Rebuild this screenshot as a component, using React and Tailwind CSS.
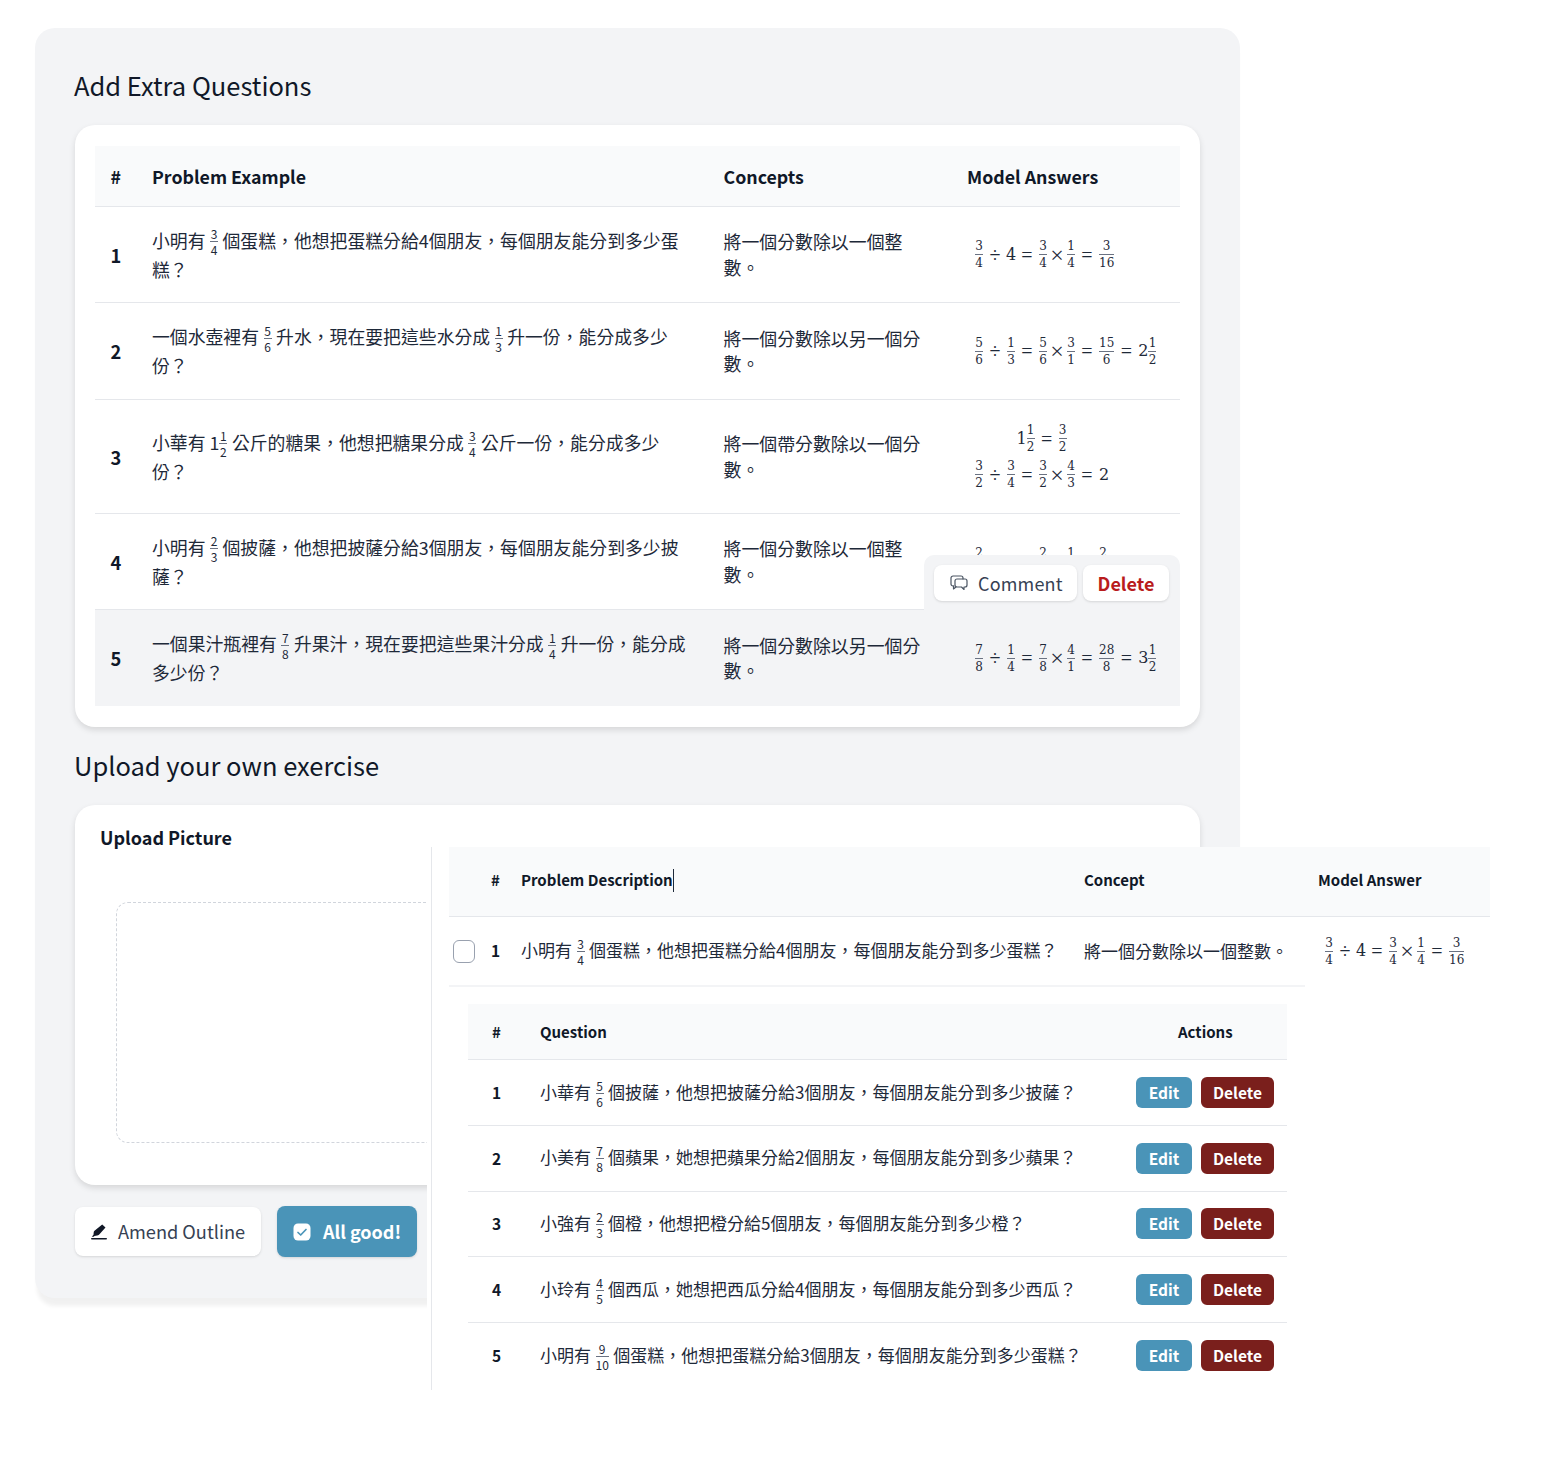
import React from "react";

const F = ({ n, d, cls = "mx-[4.500px]" }) => (
  <span className={`inline-flex flex-col items-center align-middle -my-[10px] -translate-y-px text-[12px] leading-[15px] font-normal ${cls}`}>
    <span>{n}</span>
    <span className="w-full min-w-[8px] h-px bg-gray-500"></span>
    <span>{d}</span>
  </span>
);

const MF = ({ n, d }) => (
  <span className="inline-flex flex-col items-center text-[12px] leading-[14px] font-['DejaVu_Serif',serif]">
    <span>{n}</span>
    <span className="w-full min-w-[8px] h-px bg-gray-500 my-px"></span>
    <span>{d}</span>
  </span>
);

const Op = ({ c, w = "w-[24px]", size = "text-[20px]" }) => (
  <span className={`inline-flex justify-center leading-[20px] ${size} ${w}`}>{c}</span>
);

const Mixed = ({ a, n, d }) => (
  <span className="inline-flex items-center">
    <span className="text-[16px] font-['DejaVu_Serif',serif]">{a}</span>
    <MF n={n} d={d} />
  </span>
);

const Num = ({ c }) => <span className="text-[16px] w-[8px] inline-flex justify-center font-['DejaVu_Serif',serif]">{c}</span>;

const Eq = ({ children }) => (
  <div className="flex items-center h-[36px] text-gray-800 font-['Liberation_Serif',serif] whitespace-nowrap">{children}</div>
);

const Times = () => <Op c="×" w="w-[20px]" size="text-[24px]" />;

const Math1 = ({ a, b, c, d, e, f, last }) => (
  <Eq>
    <MF n={a} d={b} />
    <Op c="÷" />
    <MF n={c} d={d} />
    <Op c="=" />
    <MF n={a} d={b} />
    <Times />
    <MF n={e} d={f} />
    <Op c="=" />
    {last}
  </Eq>
);

const rows = [
  {
    h: "h-[96px]",
    q: <>小明有<F n="3" d="4" />個蛋糕，他想把蛋糕分給4個朋友，每個朋友能分到多少蛋<br />糕？</>,
    c: <>將一個分數除以一個整<br />數。</>,
    m: (
      <Eq>
        <MF n="3" d="4" /><Op c="÷" /><Num c="4" /><Op c="=" /><MF n="3" d="4" /><Times /><MF n="1" d="4" /><Op c="=" /><MF n="3" d="16" />
      </Eq>
    ),
  },
  {
    h: "h-[97px]",
    q: <>一個水壺裡有<F n="5" d="6" />升水，現在要把這些水分成<F n="1" d="3" />升一份，能分成多少<br />份？</>,
    c: <>將一個分數除以另一個分<br />數。</>,
    m: (
      <Math1 a="5" b="6" c="1" d="3" e="3" f="1" last={<><MF n="15" d="6" /><Op c="=" /><Mixed a="2" n="1" d="2" /></>} />
    ),
  },
  {
    h: "h-[114px]",
    q: <>小華有 1<F n="1" d="2" cls="mr-[4.500px]" />公斤的糖果，他想把糖果分成<F n="3" d="4" />公斤一份，能分成多少<br />份？</>,
    c: <>將一個帶分數除以一個分<br />數。</>,
    m: (
      <div className="flex flex-col items-start">
        <div className="w-[133px] flex justify-center">
          <Eq><Mixed a="1" n="1" d="2" /><Op c="=" /><MF n="3" d="2" /></Eq>
        </div>
        <Math1 a="3" b="2" c="3" d="4" e="4" f="3" last={<span className="text-[16px] font-['DejaVu_Serif',serif]">2</span>} />
      </div>
    ),
  },
  {
    h: "h-[96px]",
    q: <>小明有<F n="2" d="3" />個披薩，他想把披薩分給3個朋友，每個朋友能分到多少披<br />薩？</>,
    c: <>將一個分數除以一個整<br />數。</>,
    m: (
      <Eq>
        <MF n="2" d="3" /><Op c="÷" /><Num c="3" /><Op c="=" /><MF n="2" d="3" /><Times /><MF n="1" d="3" /><Op c="=" /><MF n="2" d="9" />
      </Eq>
    ),
    pop: true,
  },
  {
    h: "h-[96px]",
    bg: "bg-[#f3f4f6]",
    q: <>一個果汁瓶裡有<F n="7" d="8" />升果汁，現在要把這些果汁分成<F n="1" d="4" />升一份，能分成<br />多少份？</>,
    c: <>將一個分數除以另一個分<br />數。</>,
    m: (
      <Math1 a="7" b="8" c="1" d="4" e="4" f="1" last={<><MF n="28" d="8" /><Op c="=" /><Mixed a="3" n="1" d="2" /></>} />
    ),
    last: true,
  },
];

const subs = [
  <>小華有<F n="5" d="6" />個披薩，他想把披薩分給3個朋友，每個朋友能分到多少披薩？</>,
  <>小美有<F n="7" d="8" />個蘋果，她想把蘋果分給2個朋友，每個朋友能分到多少蘋果？</>,
  <>小強有<F n="2" d="3" />個橙，他想把橙分給5個朋友，每個朋友能分到多少橙？</>,
  <>小玲有<F n="4" d="5" />個西瓜，她想把西瓜分給4個朋友，每個朋友能分到多少西瓜？</>,
  <>小明有<F n="9" d="10" />個蛋糕，他想把蛋糕分給3個朋友，每個朋友能分到多少蛋糕？</>,
];

const CommentIcon = () => (
  <svg width="18" height="16" viewBox="0 0 18 16" fill="none" stroke="#4b5563" strokeWidth="1.200" strokeLinejoin="round" strokeLinecap="round">
    <path d="M4 11H3a2 2 0 0 1-2-2V3a2 2 0 0 1 2-2h8a2 2 0 0 1 2 2v1" />
    <path d="M7 4h8a2 2 0 0 1 2 2v4a2 2 0 0 1-2 2h-1v2.500L11.500 12H7a2 2 0 0 1-2-2V6a2 2 0 0 1 2-2z" />
    <path d="M3.500 11v3l2.500-2" />
  </svg>
);

const PenIcon = () => (
  <svg width="16" height="16" viewBox="0 0 16 16" fill="#111827">
    <path d="M11.200 0.500l3.300 3-6.500 7.300c-0.500 0.500-1.200 0.800-1.900 0.800L3.500 12l-0.800 0.700H0.800l1.700-2 0.200-2.200c0-0.700 0.300-1.300 0.800-1.800z" />
    <rect x="0" y="14" width="16" height="1.600" rx="0.800" />
  </svg>
);

const CheckIcon = () => (
  <svg width="18" height="18" viewBox="0 0 18 18">
    <rect x="0.500" y="0.500" width="17" height="17" rx="4.500" fill="#ffffff" />
    <path d="M5 9.500l2.700 2.500 5.300-5.500" fill="none" stroke="#4a94b8" strokeWidth="1.700" strokeLinecap="round" strokeLinejoin="round" />
  </svg>
);

export default function App() {
  return (
    <div className="relative w-[1541px] h-[1458px] bg-white pt-[28px] pl-[35px] overflow-hidden font-['Noto_Sans_CJK_TC','Noto_Sans_CJK_SC',sans-serif] text-gray-800">
      <div className="w-[1205px] h-[1270px] bg-[#f3f4f6] rounded-[20px] shadow-[0_10px_4px_-2px_rgba(0,0,0,0.06)] pt-[40px] px-[40px]">
        <h2 className="text-[25.500px] leading-[34px] mb-[23px] -ml-px text-gray-900 font-normal">Add Extra Questions</h2>
        <div className="h-[602px] bg-white rounded-[20px] shadow-[0_3px_6px_rgba(0,0,0,0.12)] py-[21px] px-[20px]">
          <div className="flex items-center h-[61px] bg-[#f9fafb] border-b border-gray-200 text-[17.800px] font-semibold text-gray-900">
            <div className="w-[57px] pl-[15.500px]">#</div>
            <div className="w-[571.500px]">Problem Example</div>
            <div className="w-[243.500px]">Concepts</div>
            <div>Model Answers</div>
          </div>
          {rows.map((r, i) => (
            <div key={i} className={`relative flex items-center ${r.h} ${r.bg || ""} ${r.last ? "" : "border-b border-gray-200"}`}>
              <div className="w-[57px] pl-[15.500px] pt-[2px] text-[18.300px] font-bold text-gray-900">{i + 1}</div>
              <div className="w-[571.500px] text-[17.850px] leading-[29px] whitespace-nowrap">{r.q}</div>
              <div className="w-[243.500px] text-[17.900px] leading-[25.500px] whitespace-nowrap">{r.c}</div>
              <div className="pl-[8px]">{r.m}</div>
              {r.pop && (
                <div className="absolute right-0 -bottom-px w-[256px] h-[55px] bg-[#f3f4f6] rounded-t-[10px] flex gap-[6px] pl-[10px] pt-[10px]">
                  <button className="w-[143px] h-[36px] bg-white rounded-lg shadow-sm flex items-center gap-[10px] pl-[16px] text-[18px] tracking-[0.01em] text-gray-700">
                    <CommentIcon />Comment
                  </button>
                  <button className="w-[86px] h-[36px] bg-white rounded-lg shadow-sm text-[18px] font-semibold text-[#b91c1c]">Delete</button>
                </div>
              )}
            </div>
          ))}
        </div>

        <h2 className="text-[25.500px] leading-[34px] mt-[21px] mb-[23px] -ml-px text-gray-900 font-normal">Upload your own exercise</h2>
        <div className="h-[380px] bg-white rounded-[20px] shadow-[0_3px_6px_rgba(0,0,0,0.12)] pt-[19px] pl-[25px]">
          <div className="text-[18px] leading-[27px] font-bold text-gray-900">Upload Picture</div>
          <div className="mt-[51px] ml-[16px] w-[500px] h-[241px] border border-dashed border-gray-300 rounded-xl"></div>
        </div>
        <div className="flex items-center gap-[16px] mt-[21px]">
          <button className="w-[186px] h-[49px] bg-white rounded-lg shadow-sm flex items-center justify-center gap-[11px] text-[18.200px] text-gray-700">
            <PenIcon />Amend Outline
          </button>
          <button className="w-[140px] h-[51px] bg-[#4a94b8] rounded-lg shadow-sm flex items-center justify-center gap-[12px] text-[18px] font-semibold text-white">
            <CheckIcon />All good!
          </button>
        </div>
      </div>

      <div className="absolute left-[427px] top-[847px] w-[1063px] h-[543px] bg-white pl-[4px]">
        <div className="h-full border-l border-gray-200 pl-[17px]">
          <div className="flex items-center h-[70px] pb-[3px] bg-[#f9fafb] border-b border-gray-200 text-[15px] font-semibold text-gray-900">
            <div className="w-[72px] pl-[42px]">#</div>
            <div className="w-[563px] flex items-center">Problem Description<span className="w-px h-[23px] bg-gray-800"></span></div>
            <div className="w-[234px]">Concept</div>
            <div>Model Answer</div>
          </div>
          <div className="flex">
            <div className="flex items-center w-[856px] h-[70px] border-b-2 border-gray-100">
              <div className="w-[42px] pl-[4px]">
                <div className="w-[22px] h-[23px] rounded-md border border-gray-400 bg-white"></div>
              </div>
              <div className="w-[30px] text-[15.500px] font-bold text-gray-900">1</div>
              <div className="w-[563px] pb-[2px] text-[17px] whitespace-nowrap">小明有<F n="3" d="4" />個蛋糕，他想把蛋糕分給4個朋友，每個朋友能分到多少蛋糕？</div>
              <div className="text-[17px] whitespace-nowrap">將一個分數除以一個整數。</div>
            </div>
            <div className="pl-[20px] pt-[16px]">
              <Eq>
                <MF n="3" d="4" /><Op c="÷" /><Num c="4" /><Op c="=" /><MF n="3" d="4" /><Times /><MF n="1" d="4" /><Op c="=" /><MF n="3" d="16" />
              </Eq>
            </div>
          </div>
          <div className="ml-[19px] w-[819px] mt-[18px] -translate-y-px">
            <div className="flex items-center h-[56px] pt-[1px] bg-[#f9fafb] border-b border-gray-200 text-[15px] font-semibold text-gray-900">
              <div className="w-[72px] pl-[24px]">#</div>
              <div className="w-[596px]">Question</div>
              <div className="pl-[42px]">Actions</div>
            </div>
            {subs.map((s, i) => (
              <div key={i} className={`flex items-center h-[65.750px] ${i < 4 ? "border-b border-gray-200" : ""}`}>
                <div className="w-[72px] pl-[24px] text-[15.500px] font-bold text-gray-900">{i + 1}</div>
                <div className="w-[596px] pb-[2px] text-[17px] whitespace-nowrap">{s}</div>
                <button className="w-[56px] h-[31px] rounded-md bg-[#4a94b8] text-white text-[15.500px] font-semibold">Edit</button>
                <button className="ml-[9px] w-[73px] h-[31px] rounded-md bg-[#7a1f1c] text-white text-[15.500px] font-semibold">Delete</button>
              </div>
            ))}
          </div>
        </div>
      </div>
    </div>
  );
}
